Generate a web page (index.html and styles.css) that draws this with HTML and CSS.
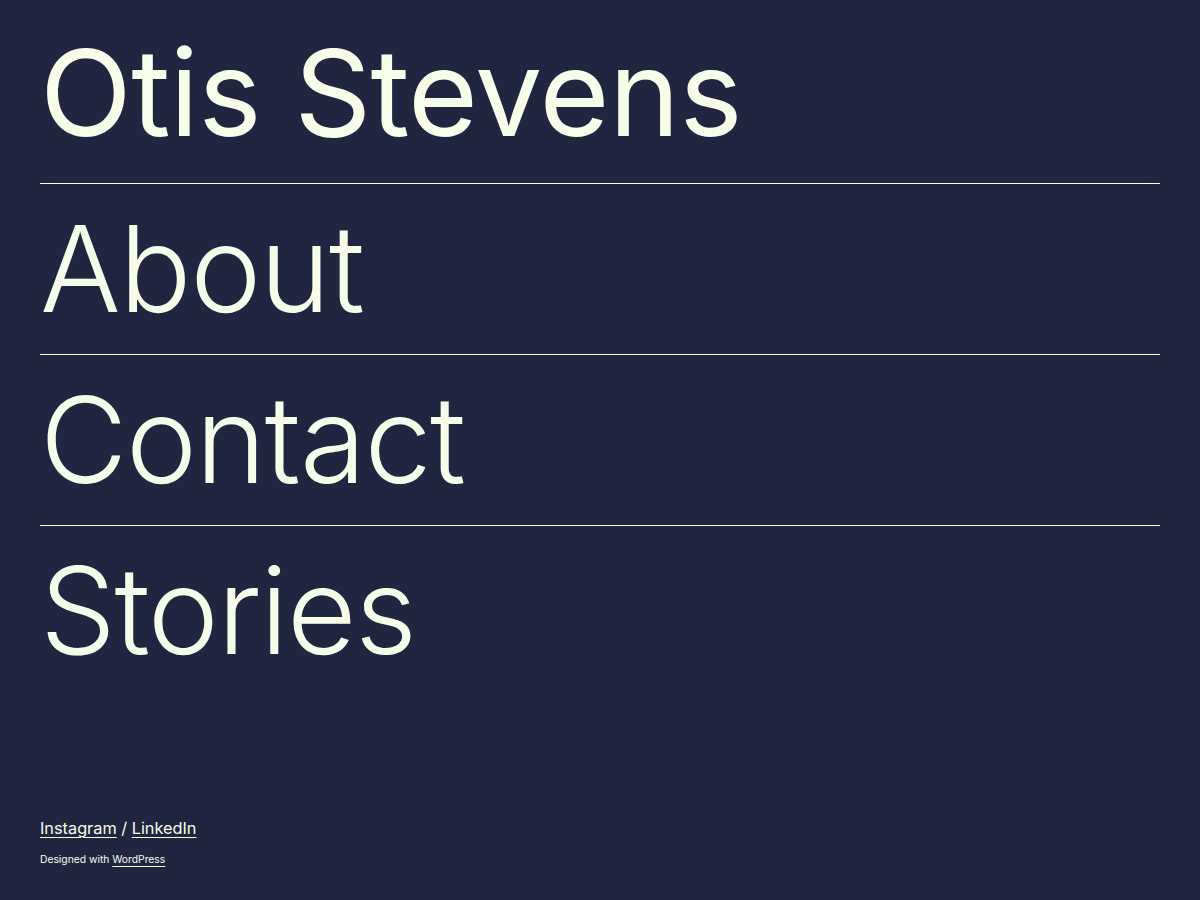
FILE: index.html
```html
<!DOCTYPE html>
<html lang="en">
<head>
<meta charset="utf-8">
<title>Otis Stevens</title>
<link rel="stylesheet" href="styles.css">
</head>
<body>
<div class="page">
  <header class="site-header">
    <h1 class="site-title">Otis Stevens</h1>
  </header>
  <nav class="menu">
    <a class="menu-item" href="#">About</a>
    <a class="menu-item" href="#">Contact</a>
    <a class="menu-item" href="#">Stories</a>
  </nav>
  <footer class="site-footer">
    <p class="social"><a href="#">Instagram</a> / <a href="#">LinkedIn</a></p>
    <p class="credit">Designed with <a href="#">WordPress</a></p>
  </footer>
</div>
</body>
</html>
```
FILE: styles.css
```css
html, body {
  margin: 0;
  padding: 0;
}
body {
  background: #212640;
  color: #f6fde9;
  font-family: Inter, "Noto Sans", sans-serif;
}
.page {
  min-height: 900px;
  box-sizing: border-box;
  padding: 20px 40px 0;
  display: flex;
  flex-direction: column;
}
.site-header {
  padding-bottom: 18px;
  border-bottom: 1px solid #f6fde9;
}
.site-title {
  margin: 0;
  font-size: 120px;
  font-weight: 400;
  line-height: 145px;
  letter-spacing: -0.005em;
}
.menu {
  display: flex;
  flex-direction: column;
}
.menu-item {
  display: block;
  color: #f6fde9;
  text-decoration: none;
  font-size: 120px;
  font-weight: 300;
  line-height: 145px;
  padding: 12px 0 13px;
  letter-spacing: -0.012em;
}
.menu-item + .menu-item {
  border-top: 1px solid #f6fde9;
}
.site-footer {
  margin-top: auto;
  padding-bottom: 33px;
}
.site-footer p {
  margin: 0;
}
.site-footer a {
  color: #f6fde9;
  text-decoration: underline;
  text-underline-offset: 3px;
  text-decoration-thickness: 1px;
}
.social {
  font-size: 16.3px;
  line-height: 24px;
}
.credit {
  margin-top: 11px !important;
  font-size: 10.3px;
  line-height: 16px;
}
```
